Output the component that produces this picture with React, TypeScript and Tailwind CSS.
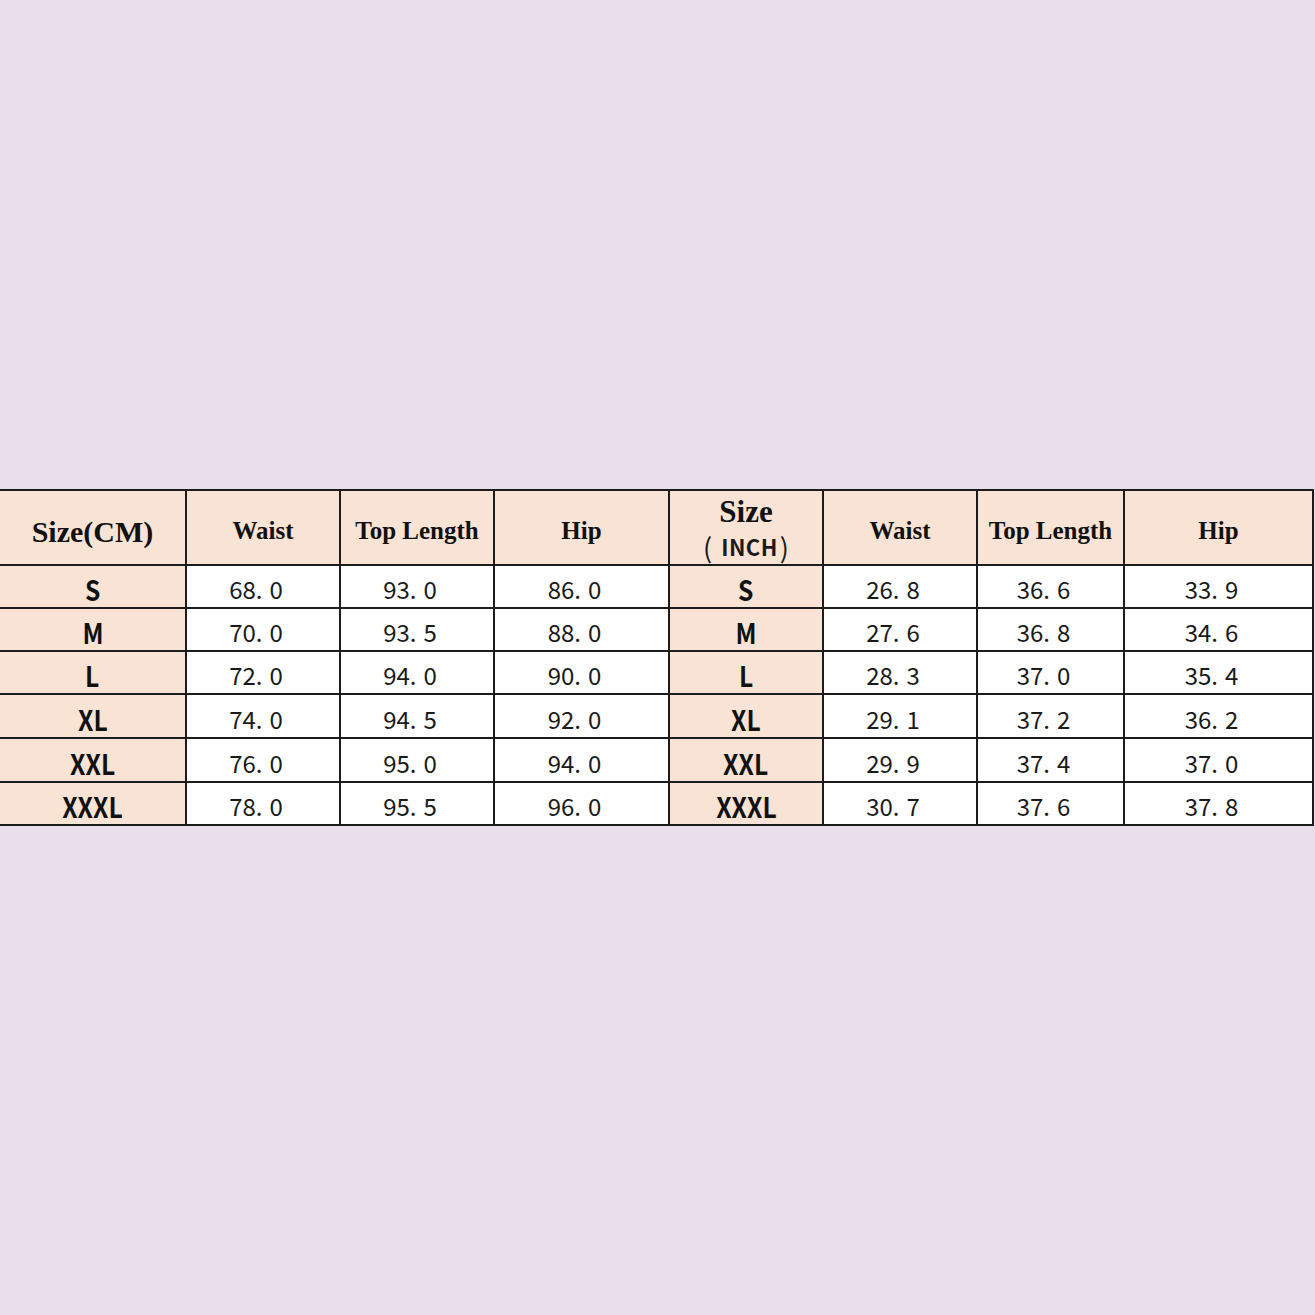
import React from "react";

type Row = { size: string; cm: string[]; inch: string[] };

const rows: Row[] = [
  { size: "S", cm: ["68.0", "93.0", "86.0"], inch: ["26.8", "36.6", "33.9"] },
  { size: "M", cm: ["70.0", "93.5", "88.0"], inch: ["27.6", "36.8", "34.6"] },
  { size: "L", cm: ["72.0", "94.0", "90.0"], inch: ["28.3", "37.0", "35.4"] },
  { size: "XL", cm: ["74.0", "94.5", "92.0"], inch: ["29.1", "37.2", "36.2"] },
  { size: "XXL", cm: ["76.0", "95.0", "94.0"], inch: ["29.9", "37.4", "37.0"] },
  { size: "XXXL", cm: ["78.0", "95.5", "96.0"], inch: ["30.7", "37.6", "37.8"] },
];

const rowHeights = ["h-[43px]", "h-[43px]", "h-[43px]", "h-[44px]", "h-[44px]", "h-[40px]"];

const serif = "font-['Liberation_Serif',serif] font-bold text-[#111]";
const cjk = "font-['Noto_Sans_CJK_SC',sans-serif] text-[#1a1a1a]";

function Num({ value }: { value: string }) {
  const [a, b] = value.split(".");
  return (
    <span className={`${cjk} text-[24px] leading-none`}>
      {a}.<span className="ml-[7px]">{b}</span>
    </span>
  );
}

function SizeLabel({ label }: { label: string }) {
  return (
    <span className={`${cjk} inline-block scale-x-[0.88] text-[28px] font-bold leading-none text-[#111]`}>
      {label}
    </span>
  );
}

export default function App() {
  const cell = "border-2 border-[#1c1c1c] p-0 text-center align-middle";
  const body = "pt-[9px]";
  const head = "pt-[7px]";
  const peach = "bg-[#f9e3d4]";
  return (
    <div className="flex min-h-[1315px] w-full items-center bg-[#e8dfeb]">
      <table className="table-fixed border-collapse" style={{ width: 1313 }}>
        <colgroup>
          <col className="w-[186px]" />
          <col className="w-[154px]" />
          <col className="w-[154px]" />
          <col className="w-[175px]" />
          <col className="w-[154px]" />
          <col className="w-[154px]" />
          <col className="w-[147px]" />
          <col className="w-[189px]" />
        </colgroup>
        <thead>
          <tr className="h-[75px]">
            <th className={`${cell} ${head} ${peach} border-l-0`}>
              <span className={`${serif} text-[30px]`}>Size(CM)</span>
            </th>
            <th className={`${cell} ${head} ${peach}`}>
              <span className={`${serif} text-[25px]`}>Waist</span>
            </th>
            <th className={`${cell} ${head} ${peach}`}>
              <span className={`${serif} text-[25px]`}>Top Length</span>
            </th>
            <th className={`${cell} ${head} ${peach}`}>
              <span className={`${serif} text-[25px]`}>Hip</span>
            </th>
            <th className={`${cell} ${peach}`}>
              <div className="flex flex-col items-center leading-none">
                <span className={`${serif} text-[31px]`}>Size</span>
                <span className={`${cjk} mt-[6px] flex items-center text-[22px] font-bold leading-none`}>
                  <span className="text-[27px] font-normal">(</span>
                  <span className="ml-[9px] mr-[2px] tracking-[0.02em]">INCH</span>
                  <span className="text-[27px] font-normal">)</span>
                </span>
              </div>
            </th>
            <th className={`${cell} ${head} ${peach}`}>
              <span className={`${serif} text-[25px]`}>Waist</span>
            </th>
            <th className={`${cell} ${head} ${peach}`}>
              <span className={`${serif} text-[25px]`}>Top Length</span>
            </th>
            <th className={`${cell} ${head} ${peach}`}>
              <span className={`${serif} text-[25px]`}>Hip</span>
            </th>
          </tr>
        </thead>
        <tbody>
          {rows.map((r, i) => (
            <tr key={r.size} className={rowHeights[i]}>
              <td className={`${cell} ${body} ${peach} border-l-0`}>
                <SizeLabel label={r.size} />
              </td>
              {r.cm.map((v, j) => (
                <td key={"cm" + j} className={`${cell} ${body} bg-white pr-[14px]`}>
                  <Num value={v} />
                </td>
              ))}
              <td className={`${cell} ${body} ${peach}`}>
                <SizeLabel label={r.size} />
              </td>
              {r.inch.map((v, j) => (
                <td key={"in" + j} className={`${cell} ${body} bg-white pr-[14px]`}>
                  <Num value={v} />
                </td>
              ))}
            </tr>
          ))}
        </tbody>
      </table>
    </div>
  );
}
